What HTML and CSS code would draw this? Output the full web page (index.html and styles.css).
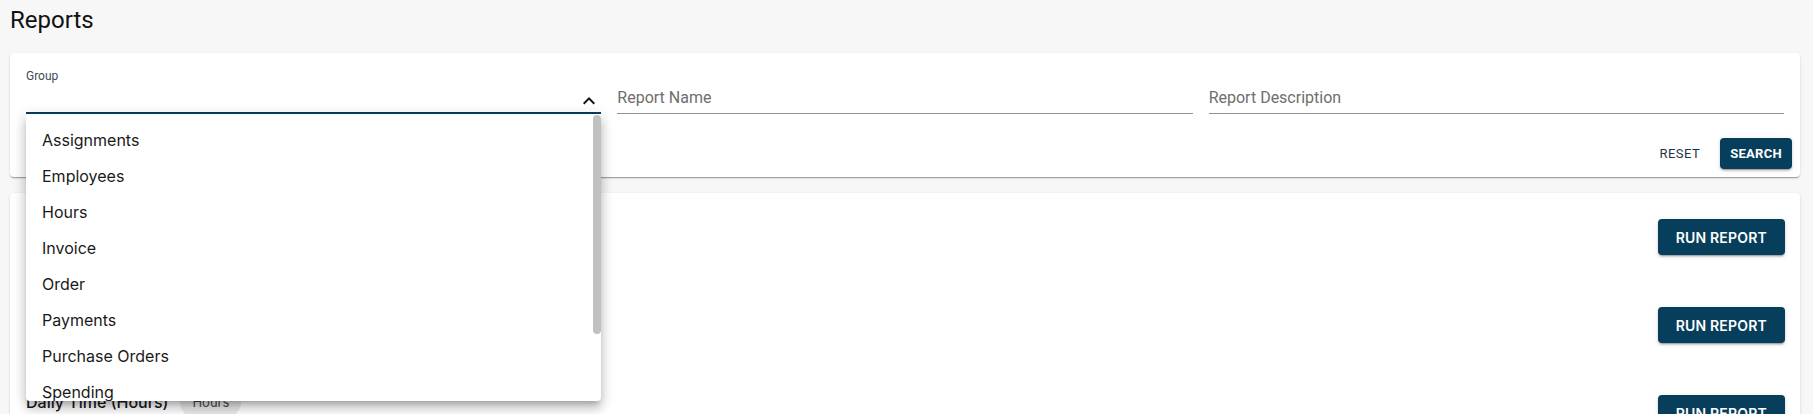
FILE: index.html
```html
<!DOCTYPE html>
<html lang="en">
<head>
<meta charset="utf-8">
<title>Reports</title>
<link rel="stylesheet" href="styles.css">
</head>
<body>
<div class="page">
  <h1 class="title">Reports</h1>

  <section class="card filters">
    <div class="fields">
      <div class="field select-field">
        <label class="field-label">Group</label>
        <div class="input focused">
          <span class="value"></span>
          <svg class="chevron" viewBox="0 0 24 24" aria-hidden="true"><path d="M7.41 15.41 12 10.83l4.59 4.58L18 14l-6-6-6 6z"/></svg>
        </div>
        <div class="menu">
          <ul class="menu-list">
            <li class="menu-item">Assignments</li>
            <li class="menu-item">Employees</li>
            <li class="menu-item">Hours</li>
            <li class="menu-item">Invoice</li>
            <li class="menu-item">Order</li>
            <li class="menu-item">Payments</li>
            <li class="menu-item">Purchase Orders</li>
            <li class="menu-item">Spending</li>
            <li class="menu-item">Timesheets</li>
          </ul>
          <div class="scroll-thumb"></div>
        </div>
      </div>
      <div class="field">
        <div class="field-label-space"></div>
        <div class="input"><span class="placeholder">Report Name</span></div>
      </div>
      <div class="field">
        <div class="field-label-space"></div>
        <div class="input"><span class="placeholder">Report Description</span></div>
      </div>
    </div>
    <div class="actions">
      <button class="btn-text" type="button">Reset</button>
      <button class="btn-contained btn-small" type="button">Search</button>
    </div>
  </section>

  <section class="card reports">
    <div class="report-row">
      <div class="report-info">
        <div class="report-name-line"><span class="report-name">Assignment List</span><span class="chip">Assignments</span></div>
        <div class="report-desc">List of active assignments</div>
      </div>
      <button class="btn-contained btn-medium" type="button">Run Report</button>
    </div>
    <div class="report-row">
      <div class="report-info">
        <div class="report-name-line"><span class="report-name">Employee Roster</span><span class="chip">Employees</span></div>
        <div class="report-desc">All employees by status</div>
      </div>
      <button class="btn-contained btn-medium" type="button">Run Report</button>
    </div>
    <div class="report-row">
      <div class="report-info">
        <div class="report-name-line"><span class="report-name">Daily Time (Hours)</span><span class="chip">Hours</span></div>
        <div class="report-desc">Hours worked per day</div>
      </div>
      <button class="btn-contained btn-medium" type="button">Run Report</button>
    </div>
  </section>
</div>
</body>
</html>
```

FILE: styles.css
```css
html, body {
  margin: 0;
  padding: 0;
  overflow: hidden;
  background: #f7f7f7;
  font-family: "Inter", "Roboto", "Liberation Sans", sans-serif;
  color: rgba(0, 0, 0, 0.87);
}

.page {
  padding: 4px 13px 0 10px;
}

.title {
  margin: 0 0 17px 0;
  font-family: "Roboto", "Liberation Sans", sans-serif;
  font-weight: 400;
  font-size: 24px;
  line-height: 32px;
  color: #111;
}

.card {
  background: #fff;
  border-radius: 4px;
  box-shadow: 0 2px 1px -1px rgba(0,0,0,0.2), 0 1px 1px 0 rgba(0,0,0,0.14), 0 1px 3px 0 rgba(0,0,0,0.12);
}

.filters {
  padding: 13px 16px 8px;
}

.fields {
  display: grid;
  grid-template-columns: repeat(3, 1fr);
  column-gap: 16px;
}

.field {
  position: relative;
  display: flex;
  flex-direction: column;
}

.field-label,
.field-label-space {
  display: block;
  height: 16px;
  font-family: "Roboto", "Liberation Sans", sans-serif;
  font-size: 12px;
  line-height: 20px;
  color: #3f4a55;
}

.input {
  position: relative;
  box-sizing: border-box;
  height: 32px;
  padding: 4px 0 4px;
  border-bottom: 1px solid #949494;
  font-family: "Roboto", "Liberation Sans", sans-serif;
  font-size: 16px;
  line-height: 23px;
}

.input.focused {
  border-bottom: 2px solid #063e5b;
  padding-bottom: 3px;
}

.placeholder {
  color: #6e6e6e;
}

.chevron {
  position: absolute;
  right: 0;
  top: 7px;
  width: 24px;
  height: 24px;
  fill: #111;
}

.menu {
  position: absolute;
  top: 100%;
  left: 0;
  right: 0;
  height: 287px;
  overflow: hidden;
  background: #fff;
  border-radius: 0 0 4px 4px;
  box-shadow: 0 5px 5px -3px rgba(0,0,0,0.2), 0 8px 10px 1px rgba(0,0,0,0.14), 0 3px 14px 2px rgba(0,0,0,0.12);
  z-index: 10;
}

.menu-list {
  list-style: none;
  margin: 0;
  padding: 8px 0;
}

.menu-item {
  height: 36px;
  padding: 0 16px;
  font-size: 16px;
  line-height: 36px;
  color: #1a1a1a;
}

.scroll-thumb {
  position: absolute;
  right: 0;
  top: 1px;
  width: 8px;
  height: 219px;
  background: #c1c1c1;
  border-radius: 4px;
}

.actions {
  display: flex;
  justify-content: flex-end;
  align-items: center;
  margin: 24px -8px 0 -8px;
}

button {
  border: 0;
  cursor: pointer;
  text-transform: uppercase;
}

.btn-text {
  background: transparent;
  padding: 4px 5px;
  margin-right: 15px;
  font-family: "Roboto", "Liberation Sans", sans-serif;
  font-weight: 400;
  font-size: 13px;
  line-height: 22px;
  letter-spacing: 0.46px;
  color: #1f3447;
}

.btn-contained {
  background: #063e5b;
  color: #fff;
  border-radius: 4px;
  box-shadow: 0 3px 1px -2px rgba(0,0,0,0.2), 0 2px 2px 0 rgba(0,0,0,0.14), 0 1px 5px 0 rgba(0,0,0,0.12);
}

.btn-small {
  height: 31px;
  padding: 0 10px;
  font-family: "Roboto", "Liberation Sans", sans-serif;
  font-weight: 700;
  font-size: 13px;
  letter-spacing: 0.3px;
}

.btn-medium {
  height: 36px;
  padding: 0 18px;
  font-family: "Inter", "Liberation Sans", sans-serif;
  font-weight: 600;
  font-size: 14px;
  letter-spacing: 0.2px;
}

.reports {
  margin-top: 16px;
}

.report-row {
  height: 88px;
  display: flex;
  align-items: center;
  justify-content: space-between;
  padding: 0 15px 0 16px;
}

.report-info {
  display: flex;
  flex-direction: column;
}

.report-name-line {
  display: flex;
  align-items: center;
  height: 32px;
}

.report-name {
  font-size: 16px;
  font-weight: 500;
  color: #1a1a1a;
}

.chip {
  margin-left: 12px;
  height: 32px;
  line-height: 32px;
  padding: 0 12px;
  border-radius: 16px;
  background: #ebebeb;
  font-size: 13px;
  color: #4a4a4a;
}

.report-desc {
  font-size: 14px;
  line-height: 22px;
  color: #666;
}
```
